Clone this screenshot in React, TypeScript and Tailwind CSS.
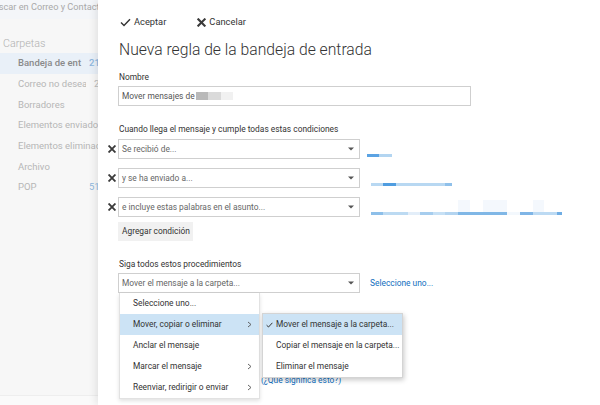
import React from "react";

const Check = () => (
  <svg width="11" height="9" viewBox="0 0 11 9" className="shrink-0">
    <path d="M1 4.6 L4 7.6 L10 1.2" fill="none" stroke="#333" strokeWidth="1.4" />
  </svg>
);

const SmallCheck = () => (
  <svg width="7" height="6" viewBox="0 0 7 6" className="shrink-0">
    <path d="M0.6 3.2 L2.5 5 L6.4 0.8" fill="none" stroke="#333" strokeWidth="1" />
  </svg>
);

const BoldX = ({ size = 9 }: { size?: number }) => (
  <svg width={size} height={size} viewBox="0 0 10 10" className="shrink-0">
    <path d="M1.5 1.5 L8.5 8.5 M8.5 1.5 L1.5 8.5" stroke="#3a3a3a" strokeWidth="2.3" strokeLinecap="square" />
  </svg>
);

const Caret = () => (
  <svg width="6" height="4" viewBox="0 0 6 4" className="shrink-0">
    <path d="M0 0.5 H6 L3 3.5Z" fill="#555" />
  </svg>
);

const Chevron = () => (
  <svg width="5" height="7" viewBox="0 0 5 7" className="shrink-0">
    <path d="M1 1 L4 3.5 L1 6" fill="none" stroke="#555" strokeWidth="0.9" />
  </svg>
);

function Select({ text }: { text: string }) {
  return (
    <div className="w-[242px] h-[20px] shrink-0 border border-[#cfcfcf] bg-white flex items-center justify-between pl-[3px] pr-[5px] text-[#666] text-[8.4px]">
      <span className="whitespace-nowrap">{text}</span>
      <Caret />
    </div>
  );
}

const folders = [
  { name: "Bandeja de ent", count: "21", active: true, nameW: "w-[66px]", countCls: "ml-[5px] text-[#8fb7de] font-medium" },
  { name: "Correo no desea", count: "2", nameW: "w-[68px]", countCls: "ml-[8px] text-[#bdbdbd]" },
  { name: "Borradores" },
  { name: "Elementos enviados" },
  { name: "Elementos eliminados" },
  { name: "Archivo" },
  { name: "POP", count: "51", nameW: "w-[66px]", countCls: "ml-[5px] text-[#8fb7de]" },
];

export default function App() {
  return (
    <div className="w-[600px] h-[405px] flex overflow-hidden bg-white [font-family:Roboto,'Noto_Sans',sans-serif]">
      {/* Sidebar */}
      <aside className="relative w-[98px] h-full shrink-0 bg-[#f7f7f7] flex flex-col overflow-hidden whitespace-nowrap">
        <div className="h-[19px] bg-[#f4f6f9] overflow-hidden">
          <span className="block -ml-[12px] text-[9.2px] leading-[14px] text-[#a9a9a9]">
            Buscar en Correo y Contactos
          </span>
        </div>
        <div className="mt-[18px] pl-[3px] text-[10.7px] leading-[14px] font-light text-[#b0b0b0]">Carpetas</div>
        <ul className="mt-[2px]">
          {folders.map((f) => (
            <li
              key={f.name}
              className={
                "h-[20.7px] flex items-center pl-[18px] text-[9.5px] " +
                (f.active ? "bg-[#e9f0f8] text-[#8a8a8a] font-medium" : "text-[#b6b6b6]")
              }
            >
              {f.count ? (
                <>
                  <span className={"overflow-hidden shrink-0 " + f.nameW}>{f.name}</span>
                  <span className={"shrink-0 " + f.countCls}>{f.count}</span>
                </>
              ) : (
                <span>{f.name}</span>
              )}
            </li>
          ))}
        </ul>
        <div className="flex-1" />
        <div className="h-[10px] border-t border-[#eeeeee] bg-[#fafafa]" />
      </aside>

      {/* Main panel */}
      <main className="relative flex-1 h-full bg-white shadow-[-3px_0_7px_rgba(0,0,0,0.08)] pl-[20px] text-[#333]">
        {/* Toolbar */}
        <div className="mt-[15px] h-[14px] flex items-center text-[9.3px] leading-[14px] pl-[2px]">
          <div className="flex items-center gap-[3px]">
            <Check />
            <span>Aceptar</span>
          </div>
          <div className="flex items-center gap-[3px] ml-[31px]">
            <BoldX size={9} />
            <span>Cancelar</span>
          </div>
        </div>

        <h1 className="mt-[11px] pl-[1px] text-[15.7px] leading-[20px] font-light text-[#333] whitespace-nowrap">
          Nueva regla de la bandeja de entrada
        </h1>

        <div className="mt-[11px] pl-[1px] text-[8.4px] leading-[12px]">Nombre</div>
        <div className="mt-[3px] w-[353px] h-[20px] border border-[#cfcfcf] flex items-center pl-[3px] text-[8.4px] text-[#555]">
          <span className="whitespace-nowrap">Mover mensajes de</span>
          <span className="ml-[1px] w-[12px] h-[8px] bg-[#b9b9b9]" />
          <span className="w-[13px] h-[8px] bg-[#dadada]" />
          <span className="w-[12px] h-[8px] bg-[#f1f1f1]" />
        </div>

        <div className="mt-[17px] pl-[1px] text-[8.4px] leading-[12px] whitespace-nowrap">
          Cuando llega el mensaje y cumple todas estas condiciones
        </div>

        <div className="mt-[4px] flex flex-col gap-[9px]">
          {/* Row 1 */}
          <div className="-ml-[11px] flex h-[20px]">
            <div className="w-[11px] h-[20px] flex items-center pl-[1px]">
              <BoldX size={8} />
            </div>
            <Select text="Se recibió de..." />
            <div className="ml-[7px] mt-[15px] flex h-[3px]">
              <div className="w-[12px] bg-[#5ba3e3]" />
              <div className="w-[13px] bg-[#b3d5f1]" />
            </div>
          </div>
          {/* Row 2 */}
          <div className="-ml-[11px] flex h-[20px]">
            <div className="w-[11px] h-[20px] flex items-center pl-[1px]">
              <BoldX size={8} />
            </div>
            <Select text="y se ha enviado a..." />
            <div className="ml-[11px] mt-[15px] flex h-[3px]">
              <div className="w-[12px] bg-[#b8d8f2]" />
              <div className="w-[13px] bg-[#4f9de0]" />
              <div className="w-[49px] bg-[#b8d8f2]" />
              <div className="w-[7px] bg-[#8fc0ea]" />
            </div>
          </div>
          {/* Row 3 */}
          <div className="-ml-[11px] flex h-[20px]">
            <div className="w-[11px] h-[20px] flex items-center pl-[1px]">
              <BoldX size={8} />
            </div>
            <Select text="e incluye estas palabras en el asunto..." />
            <div className="relative ml-[11px] mt-[15px] flex h-[2.5px]">
              <div className="absolute left-[87px] -top-[12px] w-[12px] h-[12px] bg-[#f4f8fd]" />
              <div className="absolute left-[112px] -top-[12px] w-[24px] h-[12px] bg-[#f4f8fd]" />
              <div className="absolute left-[162px] -top-[12px] w-[11px] h-[12px] bg-[#f4f8fd]" />
              <div className="w-[12px] bg-[#8dbfe9]" />
              <div className="w-[25px] bg-[#bcdaf2]" />
              <div className="w-[12px] bg-[#e3eef9]" />
              <div className="w-[13px] bg-[#a6cdee]" />
              <div className="w-[12px] bg-[#c6e0f5]" />
              <div className="w-[13px] bg-[#b3d4f0]" />
              <div className="w-[49px] bg-[#80b7e6]" />
              <div className="w-[13px] bg-[#f3f8fd]" />
              <div className="w-[13px] bg-[#7fb5e6]" />
              <div className="w-[24px] bg-[#bcdaf3]" />
              <div className="w-[5px] bg-[#6fade4]" />
            </div>
          </div>
        </div>

        <button className="mt-[5px] block w-[75px] h-[19px] bg-[#f1f1f1] text-left pl-[4px] text-[8.4px] text-[#333] whitespace-nowrap">
          Agregar condición
        </button>

        <div className="mt-[17px] pl-[1px] text-[8.4px] leading-[12px] whitespace-nowrap">
          Siga todos estos procedimientos
        </div>

        <div className="mt-[3px] flex items-center h-[20px]">
          <Select text="Mover el mensaje a la carpeta..." />
          <span className="ml-[10px] text-[8.4px] text-[#106ebe] whitespace-nowrap">Seleccione uno...</span>
        </div>

        <div className="mt-[81px] pl-[143px] text-[8.4px] leading-[12px] text-[#106ebe] whitespace-nowrap">
          (¿Qué significa esto?)
        </div>

        {/* Dropdown menu */}
        <div className="absolute left-[21px] top-[293px] w-[141px] bg-white border border-t-0 border-[#e2e2e2] shadow-[0_2px_4px_rgba(0,0,0,0.12)] text-[8.4px] text-[#333]">
          <div className="h-[21px] flex items-center pl-[13px]">Seleccione uno...</div>
          <div className="h-[21px] flex items-center justify-between pl-[13px] pr-[7px] bg-[#cce3f5]">
            <span>Mover, copiar o eliminar</span>
            <Chevron />
          </div>
          <div className="h-[21px] flex items-center pl-[13px]">Anclar el mensaje</div>
          <div className="h-[21px] flex items-center justify-between pl-[13px] pr-[7px]">
            <span>Marcar el mensaje</span>
            <Chevron />
          </div>
          <div className="h-[21px] flex items-center justify-between pl-[13px] pr-[7px]">
            <span className="whitespace-nowrap">Reenviar, redirigir o enviar</span>
            <Chevron />
          </div>
        </div>

        {/* Submenu */}
        <div className="absolute left-[164px] top-[313px] w-[141px] bg-white border border-[#d4d4d4] shadow-[1px_2px_5px_rgba(0,0,0,0.22)] text-[8.4px] text-[#333]">
          <div className="h-[21px] flex items-center pl-[3px] bg-[#cce3f5]">
            <span className="w-[10px] flex items-center">
              <SmallCheck />
            </span>
            <span className="whitespace-nowrap">Mover el mensaje a la carpeta...</span>
          </div>
          <div className="h-[21px] flex items-center pl-[13px] whitespace-nowrap">Copiar el mensaje en la carpeta...</div>
          <div className="h-[21px] flex items-center pl-[13px]">Eliminar el mensaje</div>
        </div>
      </main>
    </div>
  );
}
